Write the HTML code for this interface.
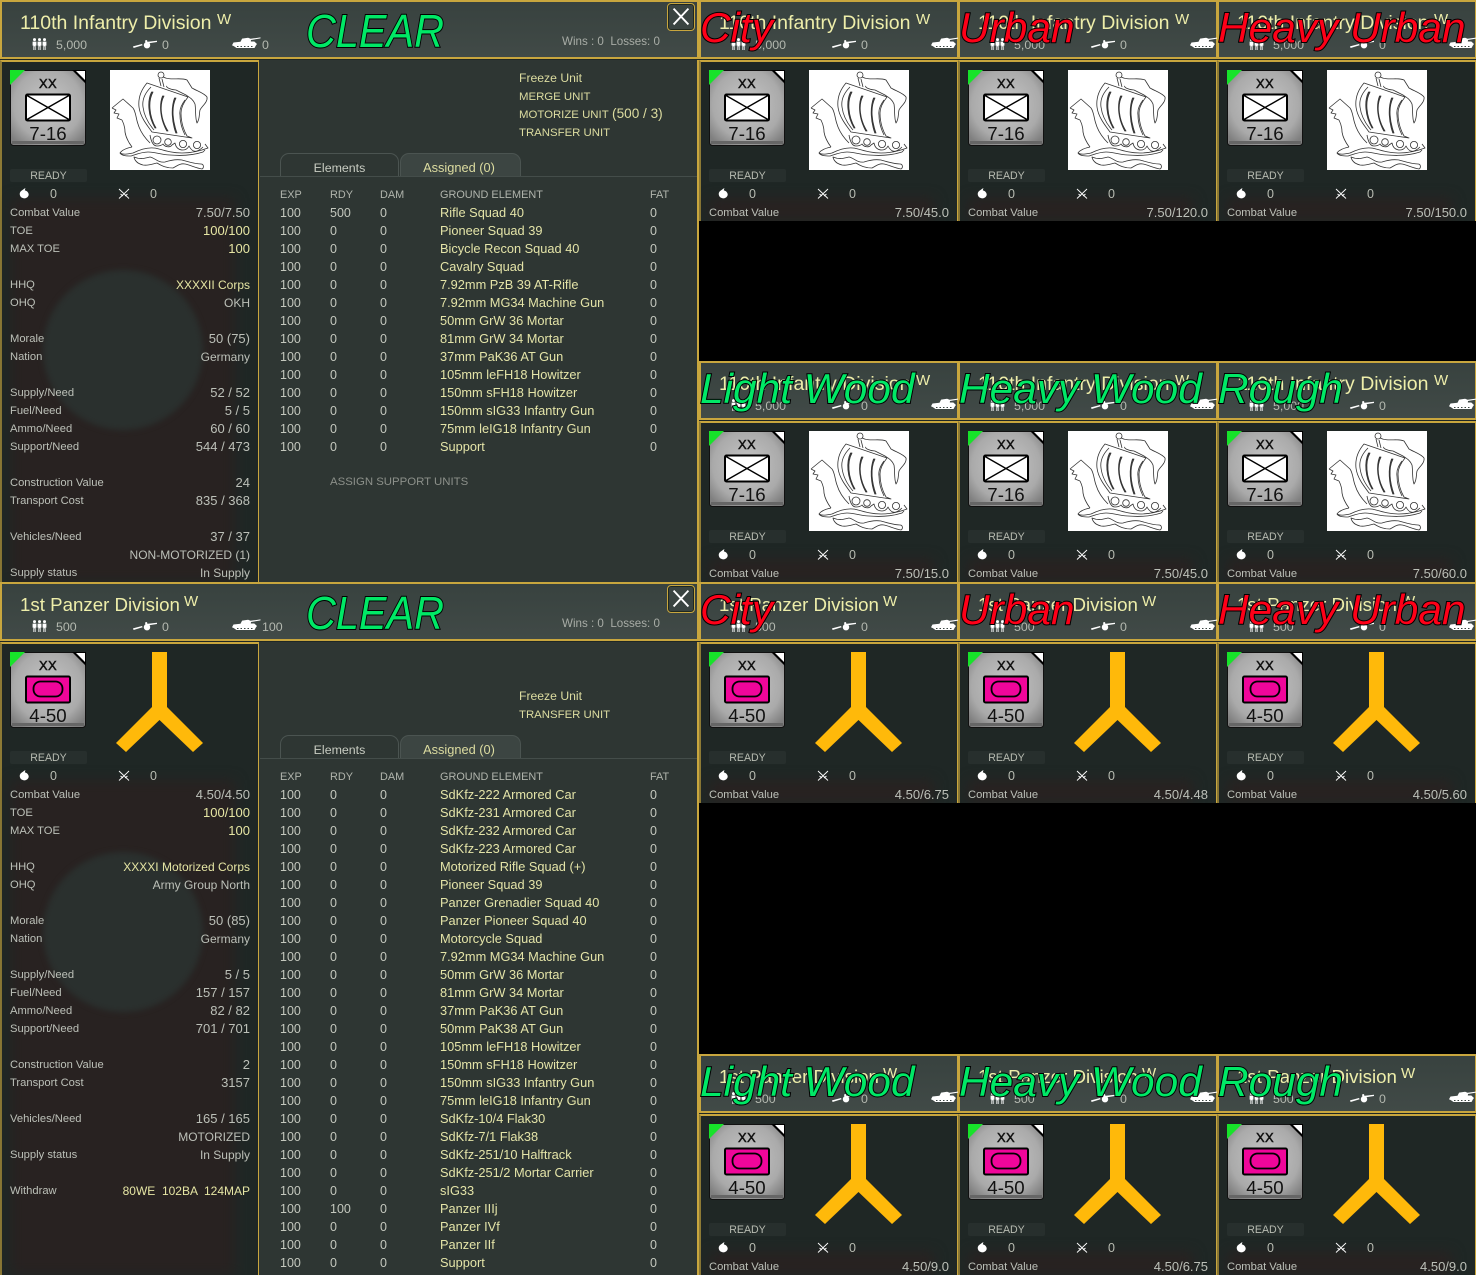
<!DOCTYPE html>
<html><head><meta charset="utf-8"><style>
html,body{margin:0;padding:0;background:#000;width:1476px;height:1275px;overflow:hidden}
body{position:relative;font-family:"Liberation Sans",sans-serif;color:#c8ccc2}
.p{position:absolute;overflow:hidden;background:#1f2725}
.m{width:699px}.s{width:259px;height:221px}
.h{position:absolute;left:0;top:0;right:0;height:59px;box-sizing:border-box;background:linear-gradient(#38423f,#414a47);border:2px solid #c8a63e}
.s .h{border-right-width:1px}
.lp{position:absolute;left:0;top:60px;width:259px;bottom:0;box-sizing:border-box;background:#1f2725;border:2px solid #c8a63e;border-bottom:0;border-right-width:1px;border-left-color:#8d7a35}
.flag{position:absolute;left:10px;top:198px;width:225px;bottom:0;background:#282221;filter:blur(6px)}
.disc{position:absolute;left:43px;top:270px;width:160px;height:160px;border-radius:50%;background:#2a302e;filter:blur(3px)}
.t{position:absolute;left:20px;top:11px;font-size:19.5px;line-height:24px;color:#eeeeaa;white-space:nowrap}
.t.z{font-size:18.7px}
.w{position:absolute;top:11px;font-size:15px;line-height:18px;color:#eeeeaa}
.v{position:absolute;top:36px;font-size:12.4px;line-height:18px;color:#b4b9b0;white-space:nowrap}
.i{position:absolute;fill:#fff;stroke:none}
.big{position:absolute;left:1px;top:2px;font-style:italic;font-size:42px;line-height:52px;white-space:nowrap;transform-origin:0 0;transform:scaleX(1.01);-webkit-text-stroke:2px #000;paint-order:stroke fill;z-index:3}
.red{color:#ff0018}.grn{color:#00e866}
.c{position:absolute;left:10px;top:70px;width:76px;height:76px}
.c b{position:absolute;left:0;width:76px;text-align:center;top:6px;font-size:13px;line-height:16px;font-weight:normal;color:#111;-webkit-text-stroke:.5px #111;letter-spacing:.3px}
.c span{position:absolute;left:0;width:76px;text-align:center;top:51px;font-size:18.7px;line-height:26px;color:#111}
.c svg{position:absolute;left:0;top:0}
.ship{position:absolute;left:110px;top:70px;width:100px;height:100px}
.yy{position:absolute;left:100px;top:60px;width:120px;height:120px}
.rd{position:absolute;left:10px;top:169px;width:77px;height:13px;background:#272f2d;border-radius:2px;text-align:center;font-size:10.6px;line-height:15px;color:#b8bcb2}
.n{position:absolute;top:185px;font-size:12.5px;line-height:18px;color:#b8bcb2}
.l{position:absolute;left:10px;top:204px;width:240px;font-size:11.2px;line-height:18px}
.l div{height:18px;display:flex;justify-content:space-between;white-space:nowrap;color:#bcc0b8}
.l span+span{font-size:13px;color:#bcc0b8}
.l span.k{font-size:12px}
.l span.y{color:#e6e6a4}
.rp{position:absolute;left:259px;top:60px;right:0;bottom:0;background:#2e3633;border-right:2px solid #c8a63e;box-sizing:border-box}
.cl{position:absolute;left:306px;top:5px;font-style:italic;font-size:46px;line-height:52px;transform-origin:0 0;transform:scaleX(.9);color:#00e866;-webkit-text-stroke:2px #000;paint-order:stroke fill}
.x{position:absolute;left:667px;top:3px;width:28px;height:28px;box-sizing:border-box;border:1px solid #c8a63e;border-radius:4px;background:#3a4441;box-shadow:inset 0 0 0 1px #20281f}
.wl{position:absolute;left:562px;top:33px;font-size:11.6px;line-height:18px;color:#a8aca6;white-space:pre}
.a{position:absolute;left:519px;top:69px;font-size:12.2px;line-height:18px;color:#dcdca0;white-space:nowrap}
.a div{height:18px;overflow:visible}
.a span{font-size:11.4px}.a i{font-style:normal;font-size:13.6px}
.tab{position:absolute;top:153px;height:23px;box-sizing:border-box;border:1px solid #4b5451;border-bottom:0;border-radius:9px 9px 0 0;text-align:center;font-size:12.4px;line-height:28px}
.tab.as2{font-size:12.8px;padding-right:3px}
.tl{position:absolute;left:260px;top:176px;width:437px;height:1px;background:#444d4a}
table{position:absolute;left:280px;top:186px;border-collapse:collapse;table-layout:fixed;width:410px;font-size:12.5px;color:#c4c8be}
td,th{padding:0;height:18px;line-height:18px;text-align:left;font-weight:normal;white-space:nowrap}
th{font-size:10.9px;color:#b0b4ac}
td:nth-child(4){color:#e4e4a8;font-size:12.8px}
.as{position:absolute;left:330px;top:473px;font-size:11.4px;line-height:18px;color:#8c908a}
</style></head><body>
<svg width="0" height="0" style="position:absolute"><defs>
<symbol id="men" viewBox="0 0 15 12"><circle cx="2.5" cy="1.600" r="1.500"/><path d="M.6 3.600h3.800v4h-.8V12H2.800V8.400H2.200V12H1.400V7.600H.6z"/><circle cx="7.500" cy="1.600" r="1.500"/><path d="M5.600 3.600h3.800v4h-.8V12H7.800V8.400H7.200V12H6.400V7.600H5.600z"/><circle cx="12.500" cy="1.600" r="1.500"/><path d="M10.600 3.600h3.800v4h-.8V12h-.8V8.400h-.6V12h-.8V7.600h-.8z"/></symbol>
<symbol id="gun" viewBox="0 0 24 10"><path d="M0 7.400L9 5l.6 1.200L.6 9z"/><circle cx="14" cy="6.200" r="3.200"/><path d="M12.500 3l11.500-1.200v1.200L13 4.800zM12 1.500l2-.5.6 3-2 .5z"/></symbol>
<symbol id="tank" viewBox="0 0 29 12"><path d="M28.500.4v1L19 3l-.2 1.500h3.500L25 7l-1 1.200-1.500 2.800H4.500L2 9.200 0 8.200l1.500-2.700L8.500 4.800l1.600-3.200 6-.8 2.500 1z"/><path d="M5 9.500h1.500M8.500 9.500H10M12 9.500h1.500M15.500 9.500H17M19 9.500h1.500" stroke="#3a4441" stroke-width="1"/></symbol>
<symbol id="bomb" viewBox="0 0 10 11"><path d="M6.400 0L5.800 2.400c2.400.5 3.900 2.300 3.900 4.300A4.500 4.300 0 1 1 1.400 3.800C2.700 2.300 4.600 1.300 6.400 0z"/></symbol>
<symbol id="sw" viewBox="0 0 12 12"><path d="M1 1l10 9.500M11 1L1 10.500M2.500 6l2.500 2M9.500 6L7 8" stroke="#fff" stroke-width=".9" fill="none"/></symbol>
<radialGradient id="cg" cx=".5" cy=".45" r=".65"><stop offset="0" stop-color="#c6c6c6"/><stop offset=".7" stop-color="#aaa"/><stop offset="1" stop-color="#7f7f7f"/></radialGradient>
<symbol id="cb" viewBox="0 0 76 76"><rect x=".5" y=".5" width="75" height="75" rx="3" fill="url(#cg)" stroke="#111"/><path d="M2 71h72v3H2z" fill="#666"/><path d="M0 0H15L0 15z" fill="#17e32a"/><path d="M62 0h14v14z" fill="#000"/><path d="M66 1h9v9z" fill="#fff"/></symbol>
<symbol id="inf" viewBox="0 0 76 76"><rect x="16" y="24.500" width="44" height="26" rx="1.500" fill="#fff" stroke="#000" stroke-width="2"/><path d="M17 25.500L59 49.500M59 25.500L17 49.500" stroke="#000" stroke-width="1.400"/></symbol>
<symbol id="pz" viewBox="0 0 76 76"><rect x="16" y="24.500" width="44" height="26" rx="1.500" fill="#f0069a" stroke="#000" stroke-width="2"/><rect x="23.500" y="29.500" width="29" height="15" rx="7" fill="#f0069a" stroke="#000" stroke-width="1.800"/></symbol>
<symbol id="vk" viewBox="0 0 100 100"><rect width="100" height="100" fill="#fff"/><g fill="none" stroke="#333" stroke-width=".8" stroke-linejoin="round">
<circle cx="51" cy="5" r="3"/><path d="M53 7c8 4 17 0 24 3l5 8c5 3 12 5 15 9 1 5-5 9-7 13-1 4 0 9-3 13-2-5-1-13-2-19-2-5-6-7-9-9l-10-5c-5 0-11-3-9-4M49 8l2 8M52 9l2 8"/>
<path d="M37 13c-6 7-9 15-8 24 1 9 7 17 13 25l40 6-5-2c-4-7-6-15-6-23 0-6 3-11 7-16L37 13z"/>
<path d="M41 17c-6 6-9 13-8 20 1 8 5 16 11 23M75 30c-3 4-6 9-5 15 0 7 2 14 5 20"/>
<path d="M43 22c-5 9-4 24 3 36l-1 0C38 46 37 31 41.500 22zM54 26c-5 9-3 24 4 35l-1.200 0C50 49 49 35 52.500 26zM66 28c-5 10-3 24 1 35l-1.200 0c-4-11-5-25-1.300-35z" fill="#444"/>
<circle cx="47" cy="70" r="4"/><circle cx="58" cy="72" r="3.300"/><circle cx="73" cy="74" r="3.600"/><circle cx="87" cy="75" r="3.600"/>
<path d="M40 65c1 6 3 11 7 11 3 0 5-1 6-2 2 3 7 4 9 1l3-2c1 5 4 7 8 7 3 0 5-2 6-4 2 4 5 6 8 5 3-1 5-3 6-4"/>
<path d="M2 38l4 2-2 3 5 1-2 4 5 2M2 38l11-9 10 9c3 4 3 11 5 16 2 7 6 13 12 19M12 50c2 4 3 8 3 12 1 6 4 11 7 15"/>
<path d="M22 77c-5 1-10 3-12 6 3 2 8 1 13 0 8-4 17-7 26-4 7 2 14 4 23 4 9 0 18-2 26-5l-3-4M10 83c2 3 7 3 11 3 6-2 11-4 17-4 8 0 14 3 22 3 12 1 24 0 33-3l2-2"/>
<path d="M24 87c7 3 11 1 16 0 5 1 8 6 15 5 6-2 11-3 17-2 7 2 13 4 19 4 3 0 3 4 1 5-6-1-12-4-17-5-5-1-8 2-12 4-7 0-11-2-16-5-5 1-9 3-14 2-4-1-8-3-9-8z"/>
</g></symbol>
<symbol id="yk" viewBox="0 0 120 120"><path d="M52 10h15v55l36 36-10 9-33.500-32L26 110l-10-9 36-36z" fill="#ffb90a"/></symbol>
<symbol id="xx" viewBox="0 0 28 28"><path d="M6 5l16 17M22 5L6 22" stroke="#fff" stroke-width="2"/></symbol>
</defs></svg>

<!-- Panel 1 main -->
<div class="p m" style="left:0;top:0;height:582px">
<div class="rp"></div><div class="h"></div>
<div class="lp"></div><div class="flag"></div><div class="disc"></div>
<div class="t">110th Infantry Division</div><div class="w" style="left:217px">W</div>
<svg class="i" style="left:32px;top:38px" width="15" height="12"><use href="#men"/></svg><div class="v" style="left:56px">5,000</div>
<svg class="i" style="left:133px;top:39px" width="24" height="10"><use href="#gun"/></svg><div class="v" style="left:162px">0</div>
<svg class="i" style="left:232px;top:37px" width="29" height="12"><use href="#tank"/></svg><div class="v" style="left:262px">0</div>
<div class="cl">CLEAR</div>
<div class="wl">Wins : 0  Losses: 0</div>
<div class="x"><svg width="26" height="26" style="position:absolute;left:0;top:0"><use href="#xx"/></svg></div>
<div class="c"><svg width="76" height="76"><use href="#cb"/><use href="#inf"/></svg><b>XX</b><span>7-16</span></div>
<svg class="ship" viewBox="0 0 100 100"><use href="#vk"/></svg>
<div class="rd">READY</div>
<svg class="i" style="left:19px;top:188px" width="10" height="11"><use href="#bomb"/></svg><div class="n" style="left:50px">0</div>
<svg class="i" style="left:118px;top:188px" width="12" height="12"><use href="#sw"/></svg><div class="n" style="left:150px">0</div>
<div class="l">
<div><span>Combat Value</span><span>7.50/7.50</span></div>
<div><span>TOE</span><span class="y">100/100</span></div>
<div><span>MAX TOE</span><span class="y">100</span></div>
<div></div>
<div><span>HHQ</span><span class="y k">XXXXII Corps</span></div>
<div><span>OHQ</span><span class="k">OKH</span></div>
<div></div>
<div><span>Morale</span><span>50 (75)</span></div>
<div><span>Nation</span><span class="k">Germany</span></div>
<div></div>
<div><span>Supply/Need</span><span>52 / 52</span></div>
<div><span>Fuel/Need</span><span>5 / 5</span></div>
<div><span>Ammo/Need</span><span>60 / 60</span></div>
<div><span>Support/Need</span><span>544 / 473</span></div>
<div></div>
<div><span>Construction Value</span><span>24</span></div>
<div><span>Transport Cost</span><span>835 / 368</span></div>
<div></div>
<div><span>Vehicles/Need</span><span>37 / 37</span></div>
<div><span></span><span class="k">NON-MOTORIZED (1)</span></div>
<div><span>Supply status</span><span class="k">In Supply</span></div>
</div>
<div class="a"><div>Freeze Unit</div><div><span>MERGE UNIT</span></div><div><span>MOTORIZE UNIT</span> <i>(500 / 3)</i></div><div><span>TRANSFER UNIT</span></div></div>
<div class="tl"></div>
<div class="tab" style="left:280px;width:119px;color:#c8ccc2;background:#2e3633">Elements</div>
<div class="tab as2" style="left:400px;width:121px;color:#dcdca0;background:#3c4542">Assigned (0)</div>
<table><colgroup><col style="width:50px"><col style="width:50px"><col style="width:60px"><col style="width:210px"><col style="width:40px"></colgroup>
<tr><th>EXP</th><th>RDY</th><th>DAM</th><th>GROUND ELEMENT</th><th>FAT</th></tr>
<tr><td>100</td><td>500</td><td>0</td><td>Rifle Squad 40</td><td>0</td></tr>
<tr><td>100</td><td>0</td><td>0</td><td>Pioneer Squad 39</td><td>0</td></tr>
<tr><td>100</td><td>0</td><td>0</td><td>Bicycle Recon Squad 40</td><td>0</td></tr>
<tr><td>100</td><td>0</td><td>0</td><td>Cavalry Squad</td><td>0</td></tr>
<tr><td>100</td><td>0</td><td>0</td><td>7.92mm PzB 39 AT-Rifle</td><td>0</td></tr>
<tr><td>100</td><td>0</td><td>0</td><td>7.92mm MG34 Machine Gun</td><td>0</td></tr>
<tr><td>100</td><td>0</td><td>0</td><td>50mm GrW 36 Mortar</td><td>0</td></tr>
<tr><td>100</td><td>0</td><td>0</td><td>81mm GrW 34 Mortar</td><td>0</td></tr>
<tr><td>100</td><td>0</td><td>0</td><td>37mm PaK36 AT Gun</td><td>0</td></tr>
<tr><td>100</td><td>0</td><td>0</td><td>105mm leFH18 Howitzer</td><td>0</td></tr>
<tr><td>100</td><td>0</td><td>0</td><td>150mm sFH18 Howitzer</td><td>0</td></tr>
<tr><td>100</td><td>0</td><td>0</td><td>150mm sIG33 Infantry Gun</td><td>0</td></tr>
<tr><td>100</td><td>0</td><td>0</td><td>75mm leIG18 Infantry Gun</td><td>0</td></tr>
<tr><td>100</td><td>0</td><td>0</td><td>Support</td><td>0</td></tr>
</table>
<div class="as">ASSIGN SUPPORT UNITS</div>
</div>

<!-- Panel 1 minis -->
<div class="p s" style="left:699px;top:0"><div class="h"></div><div class="lp"></div><div class="flag"></div>
<div class="t">110th Infantry Division</div><div class="w" style="left:217px">W</div>
<svg class="i" style="left:32px;top:38px" width="15" height="12"><use href="#men"/></svg><div class="v" style="left:56px">5,000</div><svg class="i" style="left:133px;top:39px" width="24" height="10"><use href="#gun"/></svg><div class="v" style="left:162px">0</div><svg class="i" style="left:232px;top:37px" width="29" height="12"><use href="#tank"/></svg>
<div class="big red">City</div>
<div class="c"><svg width="76" height="76"><use href="#cb"/><use href="#inf"/></svg><b>XX</b><span>7-16</span></div><svg class="ship" viewBox="0 0 100 100"><use href="#vk"/></svg>
<div class="rd">READY</div><svg class="i" style="left:19px;top:188px" width="10" height="11"><use href="#bomb"/></svg><div class="n" style="left:50px">0</div><svg class="i" style="left:118px;top:188px" width="12" height="12"><use href="#sw"/></svg><div class="n" style="left:150px">0</div>
<div class="l"><div><span>Combat Value</span><span>7.50/45.0</span></div></div></div>

<div class="p s" style="left:958px;top:0"><div class="h"></div><div class="lp"></div><div class="flag"></div>
<div class="t">110th Infantry Division</div><div class="w" style="left:217px">W</div>
<svg class="i" style="left:32px;top:38px" width="15" height="12"><use href="#men"/></svg><div class="v" style="left:56px">5,000</div><svg class="i" style="left:133px;top:39px" width="24" height="10"><use href="#gun"/></svg><div class="v" style="left:162px">0</div><svg class="i" style="left:232px;top:37px" width="29" height="12"><use href="#tank"/></svg>
<div class="big red">Urban</div>
<div class="c"><svg width="76" height="76"><use href="#cb"/><use href="#inf"/></svg><b>XX</b><span>7-16</span></div><svg class="ship" viewBox="0 0 100 100"><use href="#vk"/></svg>
<div class="rd">READY</div><svg class="i" style="left:19px;top:188px" width="10" height="11"><use href="#bomb"/></svg><div class="n" style="left:50px">0</div><svg class="i" style="left:118px;top:188px" width="12" height="12"><use href="#sw"/></svg><div class="n" style="left:150px">0</div>
<div class="l"><div><span>Combat Value</span><span>7.50/120.0</span></div></div></div>

<div class="p s" style="left:1217px;top:0"><div class="h"></div><div class="lp"></div><div class="flag"></div>
<div class="t">110th Infantry Division</div><div class="w" style="left:217px">W</div>
<svg class="i" style="left:32px;top:38px" width="15" height="12"><use href="#men"/></svg><div class="v" style="left:56px">5,000</div><svg class="i" style="left:133px;top:39px" width="24" height="10"><use href="#gun"/></svg><div class="v" style="left:162px">0</div><svg class="i" style="left:232px;top:37px" width="29" height="12"><use href="#tank"/></svg>
<div class="big red">Heavy Urban</div>
<div class="c"><svg width="76" height="76"><use href="#cb"/><use href="#inf"/></svg><b>XX</b><span>7-16</span></div><svg class="ship" viewBox="0 0 100 100"><use href="#vk"/></svg>
<div class="rd">READY</div><svg class="i" style="left:19px;top:188px" width="10" height="11"><use href="#bomb"/></svg><div class="n" style="left:50px">0</div><svg class="i" style="left:118px;top:188px" width="12" height="12"><use href="#sw"/></svg><div class="n" style="left:150px">0</div>
<div class="l"><div><span>Combat Value</span><span>7.50/150.0</span></div></div></div>

<div class="p s" style="left:699px;top:361px"><div class="h"></div><div class="lp"></div><div class="flag"></div>
<div class="t">110th Infantry Division</div><div class="w" style="left:217px">W</div>
<svg class="i" style="left:32px;top:38px" width="15" height="12"><use href="#men"/></svg><div class="v" style="left:56px">5,000</div><svg class="i" style="left:133px;top:39px" width="24" height="10"><use href="#gun"/></svg><div class="v" style="left:162px">0</div><svg class="i" style="left:232px;top:37px" width="29" height="12"><use href="#tank"/></svg>
<div class="big grn">Light Wood</div>
<div class="c"><svg width="76" height="76"><use href="#cb"/><use href="#inf"/></svg><b>XX</b><span>7-16</span></div><svg class="ship" viewBox="0 0 100 100"><use href="#vk"/></svg>
<div class="rd">READY</div><svg class="i" style="left:19px;top:188px" width="10" height="11"><use href="#bomb"/></svg><div class="n" style="left:50px">0</div><svg class="i" style="left:118px;top:188px" width="12" height="12"><use href="#sw"/></svg><div class="n" style="left:150px">0</div>
<div class="l"><div><span>Combat Value</span><span>7.50/15.0</span></div></div></div>

<div class="p s" style="left:958px;top:361px"><div class="h"></div><div class="lp"></div><div class="flag"></div>
<div class="t">110th Infantry Division</div><div class="w" style="left:217px">W</div>
<svg class="i" style="left:32px;top:38px" width="15" height="12"><use href="#men"/></svg><div class="v" style="left:56px">5,000</div><svg class="i" style="left:133px;top:39px" width="24" height="10"><use href="#gun"/></svg><div class="v" style="left:162px">0</div><svg class="i" style="left:232px;top:37px" width="29" height="12"><use href="#tank"/></svg>
<div class="big grn">Heavy Wood</div>
<div class="c"><svg width="76" height="76"><use href="#cb"/><use href="#inf"/></svg><b>XX</b><span>7-16</span></div><svg class="ship" viewBox="0 0 100 100"><use href="#vk"/></svg>
<div class="rd">READY</div><svg class="i" style="left:19px;top:188px" width="10" height="11"><use href="#bomb"/></svg><div class="n" style="left:50px">0</div><svg class="i" style="left:118px;top:188px" width="12" height="12"><use href="#sw"/></svg><div class="n" style="left:150px">0</div>
<div class="l"><div><span>Combat Value</span><span>7.50/45.0</span></div></div></div>

<div class="p s" style="left:1217px;top:361px"><div class="h"></div><div class="lp"></div><div class="flag"></div>
<div class="t">110th Infantry Division</div><div class="w" style="left:217px">W</div>
<svg class="i" style="left:32px;top:38px" width="15" height="12"><use href="#men"/></svg><div class="v" style="left:56px">5,000</div><svg class="i" style="left:133px;top:39px" width="24" height="10"><use href="#gun"/></svg><div class="v" style="left:162px">0</div><svg class="i" style="left:232px;top:37px" width="29" height="12"><use href="#tank"/></svg>
<div class="big grn">Rough</div>
<div class="c"><svg width="76" height="76"><use href="#cb"/><use href="#inf"/></svg><b>XX</b><span>7-16</span></div><svg class="ship" viewBox="0 0 100 100"><use href="#vk"/></svg>
<div class="rd">READY</div><svg class="i" style="left:19px;top:188px" width="10" height="11"><use href="#bomb"/></svg><div class="n" style="left:50px">0</div><svg class="i" style="left:118px;top:188px" width="12" height="12"><use href="#sw"/></svg><div class="n" style="left:150px">0</div>
<div class="l"><div><span>Combat Value</span><span>7.50/60.0</span></div></div></div>

<!-- Panel 2 main -->
<div class="p m" style="left:0;top:582px;height:693px">
<div class="rp"></div><div class="h"></div>
<div class="lp"></div><div class="flag"></div><div class="disc"></div>
<div class="t z">1st Panzer Division</div><div class="w" style="left:184px">W</div>
<svg class="i" style="left:32px;top:38px" width="15" height="12"><use href="#men"/></svg><div class="v" style="left:56px">500</div>
<svg class="i" style="left:133px;top:39px" width="24" height="10"><use href="#gun"/></svg><div class="v" style="left:162px">0</div>
<svg class="i" style="left:232px;top:37px" width="29" height="12"><use href="#tank"/></svg><div class="v" style="left:262px">100</div>
<div class="cl">CLEAR</div>
<div class="wl">Wins : 0  Losses: 0</div>
<div class="x"><svg width="26" height="26" style="position:absolute;left:0;top:0"><use href="#xx"/></svg></div>
<div class="c"><svg width="76" height="76"><use href="#cb"/><use href="#pz"/></svg><b>XX</b><span>4-50</span></div>
<svg class="yy" viewBox="0 0 120 120"><use href="#yk"/></svg>
<div class="rd">READY</div>
<svg class="i" style="left:19px;top:188px" width="10" height="11"><use href="#bomb"/></svg><div class="n" style="left:50px">0</div>
<svg class="i" style="left:118px;top:188px" width="12" height="12"><use href="#sw"/></svg><div class="n" style="left:150px">0</div>
<div class="l">
<div><span>Combat Value</span><span>4.50/4.50</span></div>
<div><span>TOE</span><span class="y">100/100</span></div>
<div><span>MAX TOE</span><span class="y">100</span></div>
<div></div>
<div><span>HHQ</span><span class="y k">XXXXI Motorized Corps</span></div>
<div><span>OHQ</span><span class="k">Army Group North</span></div>
<div></div>
<div><span>Morale</span><span>50 (85)</span></div>
<div><span>Nation</span><span class="k">Germany</span></div>
<div></div>
<div><span>Supply/Need</span><span>5 / 5</span></div>
<div><span>Fuel/Need</span><span>157 / 157</span></div>
<div><span>Ammo/Need</span><span>82 / 82</span></div>
<div><span>Support/Need</span><span>701 / 701</span></div>
<div></div>
<div><span>Construction Value</span><span>2</span></div>
<div><span>Transport Cost</span><span>3157</span></div>
<div></div>
<div><span>Vehicles/Need</span><span>165 / 165</span></div>
<div><span></span><span class="k">MOTORIZED</span></div>
<div><span>Supply status</span><span class="k">In Supply</span></div>
<div></div>
<div><span>Withdraw</span><span class="y k" style="white-space:pre">80WE  102BA  124MAP</span></div>
</div>
<div class="a" style="top:105px"><div>Freeze Unit</div><div><span>TRANSFER UNIT</span></div></div>
<div class="tl"></div>
<div class="tab" style="left:280px;width:119px;color:#c8ccc2;background:#2e3633">Elements</div>
<div class="tab as2" style="left:400px;width:121px;color:#dcdca0;background:#3c4542">Assigned (0)</div>
<table><colgroup><col style="width:50px"><col style="width:50px"><col style="width:60px"><col style="width:210px"><col style="width:40px"></colgroup>
<tr><th>EXP</th><th>RDY</th><th>DAM</th><th>GROUND ELEMENT</th><th>FAT</th></tr>
<tr><td>100</td><td>0</td><td>0</td><td>SdKfz-222 Armored Car</td><td>0</td></tr>
<tr><td>100</td><td>0</td><td>0</td><td>SdKfz-231 Armored Car</td><td>0</td></tr>
<tr><td>100</td><td>0</td><td>0</td><td>SdKfz-232 Armored Car</td><td>0</td></tr>
<tr><td>100</td><td>0</td><td>0</td><td>SdKfz-223 Armored Car</td><td>0</td></tr>
<tr><td>100</td><td>0</td><td>0</td><td>Motorized Rifle Squad (+)</td><td>0</td></tr>
<tr><td>100</td><td>0</td><td>0</td><td>Pioneer Squad 39</td><td>0</td></tr>
<tr><td>100</td><td>0</td><td>0</td><td>Panzer Grenadier Squad 40</td><td>0</td></tr>
<tr><td>100</td><td>0</td><td>0</td><td>Panzer Pioneer Squad 40</td><td>0</td></tr>
<tr><td>100</td><td>0</td><td>0</td><td>Motorcycle Squad</td><td>0</td></tr>
<tr><td>100</td><td>0</td><td>0</td><td>7.92mm MG34 Machine Gun</td><td>0</td></tr>
<tr><td>100</td><td>0</td><td>0</td><td>50mm GrW 36 Mortar</td><td>0</td></tr>
<tr><td>100</td><td>0</td><td>0</td><td>81mm GrW 34 Mortar</td><td>0</td></tr>
<tr><td>100</td><td>0</td><td>0</td><td>37mm PaK36 AT Gun</td><td>0</td></tr>
<tr><td>100</td><td>0</td><td>0</td><td>50mm PaK38 AT Gun</td><td>0</td></tr>
<tr><td>100</td><td>0</td><td>0</td><td>105mm leFH18 Howitzer</td><td>0</td></tr>
<tr><td>100</td><td>0</td><td>0</td><td>150mm sFH18 Howitzer</td><td>0</td></tr>
<tr><td>100</td><td>0</td><td>0</td><td>150mm sIG33 Infantry Gun</td><td>0</td></tr>
<tr><td>100</td><td>0</td><td>0</td><td>75mm leIG18 Infantry Gun</td><td>0</td></tr>
<tr><td>100</td><td>0</td><td>0</td><td>SdKfz-10/4 Flak30</td><td>0</td></tr>
<tr><td>100</td><td>0</td><td>0</td><td>SdKfz-7/1 Flak38</td><td>0</td></tr>
<tr><td>100</td><td>0</td><td>0</td><td>SdKfz-251/10 Halftrack</td><td>0</td></tr>
<tr><td>100</td><td>0</td><td>0</td><td>SdKfz-251/2 Mortar Carrier</td><td>0</td></tr>
<tr><td>100</td><td>0</td><td>0</td><td>sIG33</td><td>0</td></tr>
<tr><td>100</td><td>100</td><td>0</td><td>Panzer IIIj</td><td>0</td></tr>
<tr><td>100</td><td>0</td><td>0</td><td>Panzer IVf</td><td>0</td></tr>
<tr><td>100</td><td>0</td><td>0</td><td>Panzer IIf</td><td>0</td></tr>
<tr><td>100</td><td>0</td><td>0</td><td>Support</td><td>0</td></tr>
</table>
</div>

<!-- Panel 2 minis -->
<div class="p s" style="left:699px;top:582px"><div class="h"></div><div class="lp"></div><div class="flag"></div>
<div class="t z">1st Panzer Division</div><div class="w" style="left:184px">W</div>
<svg class="i" style="left:32px;top:38px" width="15" height="12"><use href="#men"/></svg><div class="v" style="left:56px">500</div><svg class="i" style="left:133px;top:39px" width="24" height="10"><use href="#gun"/></svg><div class="v" style="left:162px">0</div><svg class="i" style="left:232px;top:37px" width="29" height="12"><use href="#tank"/></svg>
<div class="big red">City</div>
<div class="c"><svg width="76" height="76"><use href="#cb"/><use href="#pz"/></svg><b>XX</b><span>4-50</span></div><svg class="yy" viewBox="0 0 120 120"><use href="#yk"/></svg>
<div class="rd">READY</div><svg class="i" style="left:19px;top:188px" width="10" height="11"><use href="#bomb"/></svg><div class="n" style="left:50px">0</div><svg class="i" style="left:118px;top:188px" width="12" height="12"><use href="#sw"/></svg><div class="n" style="left:150px">0</div>
<div class="l"><div><span>Combat Value</span><span>4.50/6.75</span></div></div></div>

<div class="p s" style="left:958px;top:582px"><div class="h"></div><div class="lp"></div><div class="flag"></div>
<div class="t z">1st Panzer Division</div><div class="w" style="left:184px">W</div>
<svg class="i" style="left:32px;top:38px" width="15" height="12"><use href="#men"/></svg><div class="v" style="left:56px">500</div><svg class="i" style="left:133px;top:39px" width="24" height="10"><use href="#gun"/></svg><div class="v" style="left:162px">0</div><svg class="i" style="left:232px;top:37px" width="29" height="12"><use href="#tank"/></svg>
<div class="big red">Urban</div>
<div class="c"><svg width="76" height="76"><use href="#cb"/><use href="#pz"/></svg><b>XX</b><span>4-50</span></div><svg class="yy" viewBox="0 0 120 120"><use href="#yk"/></svg>
<div class="rd">READY</div><svg class="i" style="left:19px;top:188px" width="10" height="11"><use href="#bomb"/></svg><div class="n" style="left:50px">0</div><svg class="i" style="left:118px;top:188px" width="12" height="12"><use href="#sw"/></svg><div class="n" style="left:150px">0</div>
<div class="l"><div><span>Combat Value</span><span>4.50/4.48</span></div></div></div>

<div class="p s" style="left:1217px;top:582px"><div class="h"></div><div class="lp"></div><div class="flag"></div>
<div class="t z">1st Panzer Division</div><div class="w" style="left:184px">W</div>
<svg class="i" style="left:32px;top:38px" width="15" height="12"><use href="#men"/></svg><div class="v" style="left:56px">500</div><svg class="i" style="left:133px;top:39px" width="24" height="10"><use href="#gun"/></svg><div class="v" style="left:162px">0</div><svg class="i" style="left:232px;top:37px" width="29" height="12"><use href="#tank"/></svg>
<div class="big red">Heavy Urban</div>
<div class="c"><svg width="76" height="76"><use href="#cb"/><use href="#pz"/></svg><b>XX</b><span>4-50</span></div><svg class="yy" viewBox="0 0 120 120"><use href="#yk"/></svg>
<div class="rd">READY</div><svg class="i" style="left:19px;top:188px" width="10" height="11"><use href="#bomb"/></svg><div class="n" style="left:50px">0</div><svg class="i" style="left:118px;top:188px" width="12" height="12"><use href="#sw"/></svg><div class="n" style="left:150px">0</div>
<div class="l"><div><span>Combat Value</span><span>4.50/5.60</span></div></div></div>

<div class="p s" style="left:699px;top:1054px"><div class="h"></div><div class="lp"></div><div class="flag"></div>
<div class="t z">1st Panzer Division</div><div class="w" style="left:184px">W</div>
<svg class="i" style="left:32px;top:38px" width="15" height="12"><use href="#men"/></svg><div class="v" style="left:56px">500</div><svg class="i" style="left:133px;top:39px" width="24" height="10"><use href="#gun"/></svg><div class="v" style="left:162px">0</div><svg class="i" style="left:232px;top:37px" width="29" height="12"><use href="#tank"/></svg>
<div class="big grn">Light Wood</div>
<div class="c"><svg width="76" height="76"><use href="#cb"/><use href="#pz"/></svg><b>XX</b><span>4-50</span></div><svg class="yy" viewBox="0 0 120 120"><use href="#yk"/></svg>
<div class="rd">READY</div><svg class="i" style="left:19px;top:188px" width="10" height="11"><use href="#bomb"/></svg><div class="n" style="left:50px">0</div><svg class="i" style="left:118px;top:188px" width="12" height="12"><use href="#sw"/></svg><div class="n" style="left:150px">0</div>
<div class="l"><div><span>Combat Value</span><span>4.50/9.0</span></div></div></div>

<div class="p s" style="left:958px;top:1054px"><div class="h"></div><div class="lp"></div><div class="flag"></div>
<div class="t z">1st Panzer Division</div><div class="w" style="left:184px">W</div>
<svg class="i" style="left:32px;top:38px" width="15" height="12"><use href="#men"/></svg><div class="v" style="left:56px">500</div><svg class="i" style="left:133px;top:39px" width="24" height="10"><use href="#gun"/></svg><div class="v" style="left:162px">0</div><svg class="i" style="left:232px;top:37px" width="29" height="12"><use href="#tank"/></svg>
<div class="big grn">Heavy Wood</div>
<div class="c"><svg width="76" height="76"><use href="#cb"/><use href="#pz"/></svg><b>XX</b><span>4-50</span></div><svg class="yy" viewBox="0 0 120 120"><use href="#yk"/></svg>
<div class="rd">READY</div><svg class="i" style="left:19px;top:188px" width="10" height="11"><use href="#bomb"/></svg><div class="n" style="left:50px">0</div><svg class="i" style="left:118px;top:188px" width="12" height="12"><use href="#sw"/></svg><div class="n" style="left:150px">0</div>
<div class="l"><div><span>Combat Value</span><span>4.50/6.75</span></div></div></div>

<div class="p s" style="left:1217px;top:1054px"><div class="h"></div><div class="lp"></div><div class="flag"></div>
<div class="t z">1st Panzer Division</div><div class="w" style="left:184px">W</div>
<svg class="i" style="left:32px;top:38px" width="15" height="12"><use href="#men"/></svg><div class="v" style="left:56px">500</div><svg class="i" style="left:133px;top:39px" width="24" height="10"><use href="#gun"/></svg><div class="v" style="left:162px">0</div><svg class="i" style="left:232px;top:37px" width="29" height="12"><use href="#tank"/></svg>
<div class="big grn">Rough</div>
<div class="c"><svg width="76" height="76"><use href="#cb"/><use href="#pz"/></svg><b>XX</b><span>4-50</span></div><svg class="yy" viewBox="0 0 120 120"><use href="#yk"/></svg>
<div class="rd">READY</div><svg class="i" style="left:19px;top:188px" width="10" height="11"><use href="#bomb"/></svg><div class="n" style="left:50px">0</div><svg class="i" style="left:118px;top:188px" width="12" height="12"><use href="#sw"/></svg><div class="n" style="left:150px">0</div>
<div class="l"><div><span>Combat Value</span><span>4.50/9.0</span></div></div></div>
</body></html>
